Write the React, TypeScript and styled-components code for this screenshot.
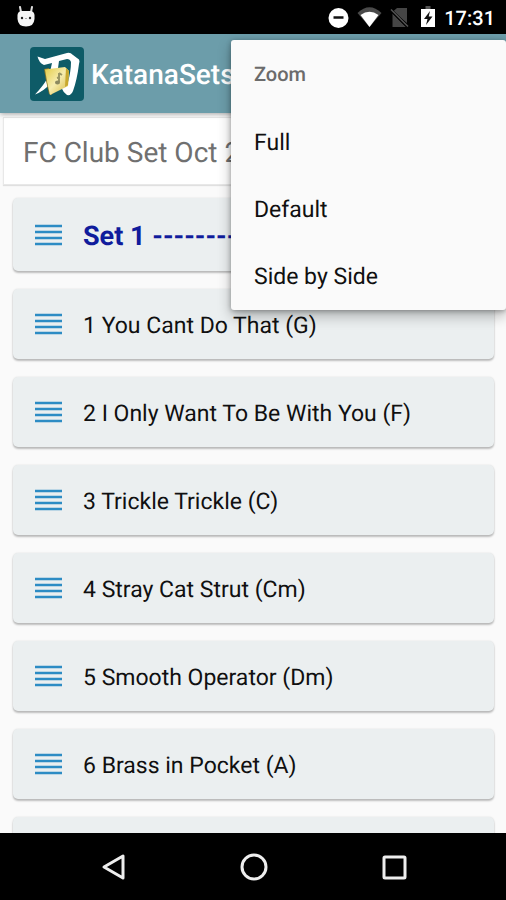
import React from "react";
import styled, { createGlobalStyle } from "styled-components";

const GlobalStyle = createGlobalStyle`
  * { box-sizing: border-box; }
  body {
    margin: 0;
    background: #fafafa;
    font-family: Roboto, "Liberation Sans", sans-serif;
    text-rendering: geometricPrecision;
  }
`;

const Screen = styled.div`
  position: relative;
  display: flex;
  flex-direction: column;
  height: 100vh;
  overflow: hidden;
`;

const StatusBar = styled.div`
  flex: none;
  display: flex;
  align-items: center;
  justify-content: space-between;
  height: 34px;
  padding: 0 11px 0 16px;
  background: #000;
`;

const StatusIcons = styled.div`
  display: flex;
  align-items: center;
`;

const Clock = styled.time`
  margin-left: 9px;
  padding-top: 2px;
  color: #fff;
  font-size: 20px;
  font-weight: 500;
  line-height: 32px;
`;

const AppBar = styled.header`
  flex: none;
  position: relative;
  display: flex;
  align-items: center;
  gap: 7px;
  height: 79px;
  padding-left: 30px;
  background: #6c9daa;
  box-shadow: 0 1px 5px rgba(0, 0, 0, 0.35);
`;

const AppTitle = styled.h1`
  margin: 0;
  padding-top: 2px;
  color: #fff;
  font-size: 28px;
  font-weight: 500;
  line-height: 32px;
`;

const SetName = styled.input`
  flex: none;
  height: 68px;
  margin: 4px 4px 0 3px;
  padding: 2px 19px 0;
  border: 1px solid #e8e8e8;
  border-radius: 0;
  outline: none;
  background: #fff;
  box-shadow: 0 1px 1px rgba(0, 0, 0, 0.1);
  color: #707070;
  font-family: inherit;
  font-size: 28px;
  text-rendering: inherit;
`;

const SongList = styled.ul`
  flex: 1;
  display: flex;
  flex-direction: column;
  gap: 18px;
  min-height: 0;
  margin: 0;
  padding: 13px 12px 0 13px;
  overflow: hidden;
  list-style: none;
`;

const SongCard = styled.li<{ $heading?: boolean }>`
  flex: none;
  display: flex;
  align-items: center;
  gap: 21px;
  height: ${(p) => (p.$heading ? 73 : 70)}px;
  padding-left: 21px;
  overflow: hidden;
  border-radius: 5px;
  background: #ebeff0;
  box-shadow: 0 2px 2px rgba(0, 0, 0, 0.24), 0 0 2px rgba(0, 0, 0, 0.12);
`;

const SongTitle = styled.span<{ $heading?: boolean }>`
  padding-top: 3px;
  color: ${(p) => (p.$heading ? "#101c9c" : "#101010")};
  font-size: ${(p) => (p.$heading ? 27 : 23)}px;
  font-weight: ${(p) => (p.$heading ? 700 : 400)};
  line-height: 32px;
  white-space: nowrap;
`;

const DragHandle = styled.button`
  flex: none;
  display: grid;
  padding: 0;
  border: 0;
  background: none;
`;

const Menu = styled.div`
  position: absolute;
  z-index: 2;
  top: 40px;
  right: 0;
  display: grid;
  grid-template-rows: repeat(4, 1fr);
  width: 275px;
  height: 270px;
  padding-top: 2px;
  border-radius: 3px;
  background: #fafafa;
  box-shadow: 0 6px 14px rgba(0, 0, 0, 0.28), 0 1px 5px rgba(0, 0, 0, 0.3);
`;

const MenuHeading = styled.div`
  display: flex;
  align-items: center;
  padding: 0 23px 3px;
  color: #6b6b6b;
  font-size: 20px;
  font-weight: 500;
`;

const MenuItem = styled.button`
  padding: 0 23px;
  border: 0;
  background: none;
  color: #101010;
  font-family: inherit;
  font-size: 23px;
  text-align: left;
  text-rendering: inherit;
`;

const NavBar = styled.nav`
  flex: none;
  display: flex;
  justify-content: center;
  height: 67px;
  background: #000;
`;

const NavButton = styled.button`
  display: grid;
  place-items: center;
  width: 140px;
  padding: 0;
  border: 0;
  background: none;
`;

const CatIcon = () => (
  <svg width="20" height="22" viewBox="0 0 20 22" aria-hidden="true">
    <path d="M4 1 5 6M16 1 15 6" stroke="#ddd" strokeWidth="2" strokeLinecap="round" />
    <path d="M1.500 9Q2 5.500 5 5H15Q18 5.500 18.500 9V13Q18 20.500 10 20.500T1.500 13Z" fill="#f5f5f5" />
    <circle cx="6" cy="12" r="1.200" fill="#222" />
    <circle cx="14" cy="12" r="1.200" fill="#222" />
    <path d="M9 12.500h2" stroke="#aaa" />
  </svg>
);

const NotificationIcons = () => (
  <svg width="107" height="24" viewBox="328 5 107 24" aria-hidden="true">
    <circle cx="338.500" cy="18" r="10" fill="#fff" />
    <path d="M333.500 17.500h10" stroke="#111" strokeWidth="2.500" />
    <path d="M357.500 13Q369.500 1.500 381.500 13L369.500 27Z" fill="#4a4a4a" />
    <path d="M360.500 15Q369.500 8.500 378.500 15L369.500 27Z" fill="#fff" />
    <path d="M397 8H407V23L393 11.500ZM392.500 13.500V27H406Z" fill="#454545" />
    <path d="M390.500 9.500 408 27" stroke="#000" strokeWidth="3" />
    <path d="M391 9.500 408 26.500" stroke="#555" strokeWidth="1.500" />
    <path d="M425.500 6h5v3h-5z" fill="#555" />
    <path d="M421 9h14v18h-14z" fill="#fff" />
    <path d="M430 11 424 19H427.500L426 25L432.500 16.500H428.700Z" fill="#111" />
  </svg>
);

const AppLogo = () => (
  <svg width="54" height="54" viewBox="0 0 54 54" aria-hidden="true">
    <defs>
      <linearGradient id="page" x1="0" y1="0" x2="1" y2="1">
        <stop offset="0" stopColor="#e3cc45" />
        <stop offset="0.5" stopColor="#f6ecae" />
        <stop offset="1" stopColor="#d5b73a" />
      </linearGradient>
    </defs>
    <rect width="54" height="54" rx="4" fill="#0e5b67" />
    <path
      d="M7.500 9.500 15 12 37 6Q40 5 43 8L49 12.500Q50 14 49 17Q47 33 43 44Q41 49 37 48Q33 45 31 40Q36 42 38 35Q41 24 41 15Q40 12 37 12L29 14Q28 28 20 37Q14 44 5 47.500Q13 39 17 32Q21 24 22 16L14 18Q9 16 7.500 9.500Z"
      fill="#fff"
    />
    <path d="M14 22 19 21 22 48 19 47Q16 35 14 22Z" fill="#8b7828" />
    <path d="M15 22.500 35 20 39 24 38 39 20 48Q17 36 15 22.500Z" fill="url(#page)" />
    <path d="M36 21 39 24 38 38 35 40Z" fill="#c8a82d" />
    <path d="M29 26V35M29 26 32 28M27 31 30 30" stroke="#9a9663" strokeWidth="2" fill="none" />
    <ellipse cx="27.500" cy="35.500" rx="2.500" ry="2" fill="#8c8960" />
  </svg>
);

const LinesIcon = () => (
  <svg width="28" height="22" viewBox="0 0 28 22" aria-hidden="true">
    <path d="M1 2h27M1 8h27M1 14h27M1 20h27" stroke="#2d8cc4" strokeWidth="2.400" />
  </svg>
);

const songs = [
  "1 You Cant Do That (G)",
  "2 I Only Want To Be With You (F)",
  "3 Trickle Trickle (C)",
  "4 Stray Cat Strut (Cm)",
  "5 Smooth Operator (Dm)",
  "6 Brass in Pocket (A)",
];

const zoomOptions = ["Full", "Default", "Side by Side"];

const navItems = [
  { label: "Back", shape: <path d="M25 4V26L6 15Z" strokeLinejoin="round" /> },
  { label: "Home", shape: <circle cx="16" cy="15" r="12" /> },
  { label: "Overview", shape: <rect x="6" y="5" width="21" height="21" rx="1" /> },
];

export default function App() {
  return (
    <Screen>
      <GlobalStyle />
      <StatusBar>
        <CatIcon />
        <StatusIcons>
          <NotificationIcons />
          <Clock>17:31</Clock>
        </StatusIcons>
      </StatusBar>
      <AppBar>
        <AppLogo />
        <AppTitle>KatanaSets</AppTitle>
      </AppBar>
      <SetName aria-label="Set name" defaultValue="FC Club Set Oct 2" />
      <SongList>
        <SongCard $heading>
          <DragHandle aria-label="Move Set 1">
            <LinesIcon />
          </DragHandle>
          <SongTitle $heading>Set 1 --------</SongTitle>
        </SongCard>
        {songs.map((song) => (
          <SongCard key={song}>
            <DragHandle aria-label={`Move ${song}`}>
              <LinesIcon />
            </DragHandle>
            <SongTitle>{song}</SongTitle>
          </SongCard>
        ))}
        <SongCard />
      </SongList>
      <Menu role="menu" aria-labelledby="zoom-heading">
        <MenuHeading id="zoom-heading">Zoom</MenuHeading>
        {zoomOptions.map((option) => (
          <MenuItem key={option} role="menuitem">
            {option}
          </MenuItem>
        ))}
      </Menu>
      <NavBar>
        {navItems.map((item) => (
          <NavButton key={item.label} aria-label={item.label}>
            <svg width="30" height="30" viewBox="0 0 30 30" fill="none" stroke="#eee" strokeWidth="3">
              {item.shape}
            </svg>
          </NavButton>
        ))}
      </NavBar>
    </Screen>
  );
}
